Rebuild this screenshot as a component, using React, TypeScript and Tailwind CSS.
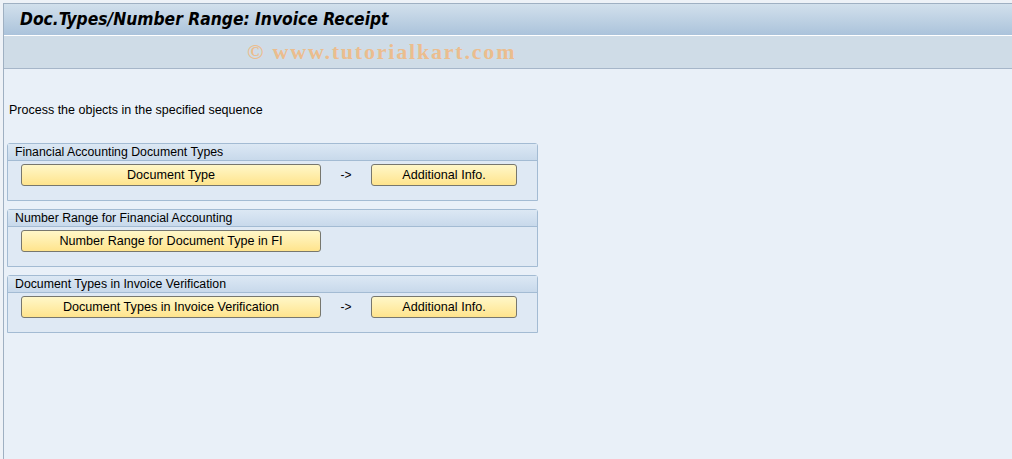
import React from "react";

const font = { fontFamily: '"Liberation Sans", Arial, sans-serif' };

function SapButton({ label, w }: { label: string; w: string }) {
  return (
    <button
      className={`${w} h-[22px] shrink-0 rounded-[3px] border border-[#77776e] bg-gradient-to-b from-[#fff7c8] to-[#ffe48c] text-[12.6px] leading-none text-black`}
    >
      {label}
    </button>
  );
}

function Group({ title, main, extra }: { title: string; main: string; extra?: boolean }) {
  return (
    <div className="w-[531px] rounded-t-[3px] border border-[#a3bbd3] bg-[#dfe9f4]">
      <div className="h-[17px] border-b border-[#a3bbd3] bg-gradient-to-b from-[#dce8f4] to-[#c8d9eb] pl-[7px] text-[12.3px] leading-[16px] text-black">
        {title}
      </div>
      <div className="flex h-[39px] items-start pl-[13px] pt-[3px]">
        <SapButton label={main} w="w-[300px]" />
        {extra && (
          <>
            <span className="w-[50px] pt-[5px] text-center text-[12px] leading-none">-&gt;</span>
            <SapButton label="Additional Info." w="w-[146px]" />
          </>
        )}
      </div>
    </div>
  );
}

export default function App() {
  return (
    <div className="h-[459px] w-[1012px] overflow-hidden bg-[#eef2f7] pl-[3px] pt-[3px]" style={font}>
      <div className="h-full border-l border-t border-[#9fb0c2] bg-[#e9f0f8]">
        {/* title bar */}
        <div className="h-[32px] border-b border-white bg-gradient-to-b from-[#d2e0ec] to-[#abc3db] pl-[16px] pt-[5px]">
          <h1
            className="text-[17.3px] font-bold italic leading-[20px] text-black"
            style={{ fontFamily: '"DejaVu Sans Condensed", "DejaVu Sans", sans-serif' }}
          >
            Doc.Types/Number Range: Invoice Receipt
          </h1>
        </div>
        {/* toolbar with watermark */}
        <div className="flex h-[33px] items-center border-b border-[#a6b6c9] bg-[#cfdce7] pl-[243px]">
          <span
            className="text-[22px] font-bold leading-none tracking-[1.8px] text-[#ebbd8e]"
            style={{ fontFamily: '"Liberation Serif", "Times New Roman", serif' }}
          >
            © www.tutorialkart.com
          </span>
        </div>

        <div className="pl-[3px]">
          <p className="pt-[34px] pl-[2px] text-[12.5px] leading-[15px] text-black">
            Process the objects in the specified sequence
          </p>
          <div className="mt-[25px] flex flex-col gap-[8px]">
            <Group title="Financial Accounting Document Types" main="Document Type" extra />
            <Group title="Number Range for Financial Accounting" main="Number Range for Document Type in FI" />
            <Group title="Document Types in Invoice Verification" main="Document Types in Invoice Verification" extra />
          </div>
        </div>
      </div>
    </div>
  );
}
